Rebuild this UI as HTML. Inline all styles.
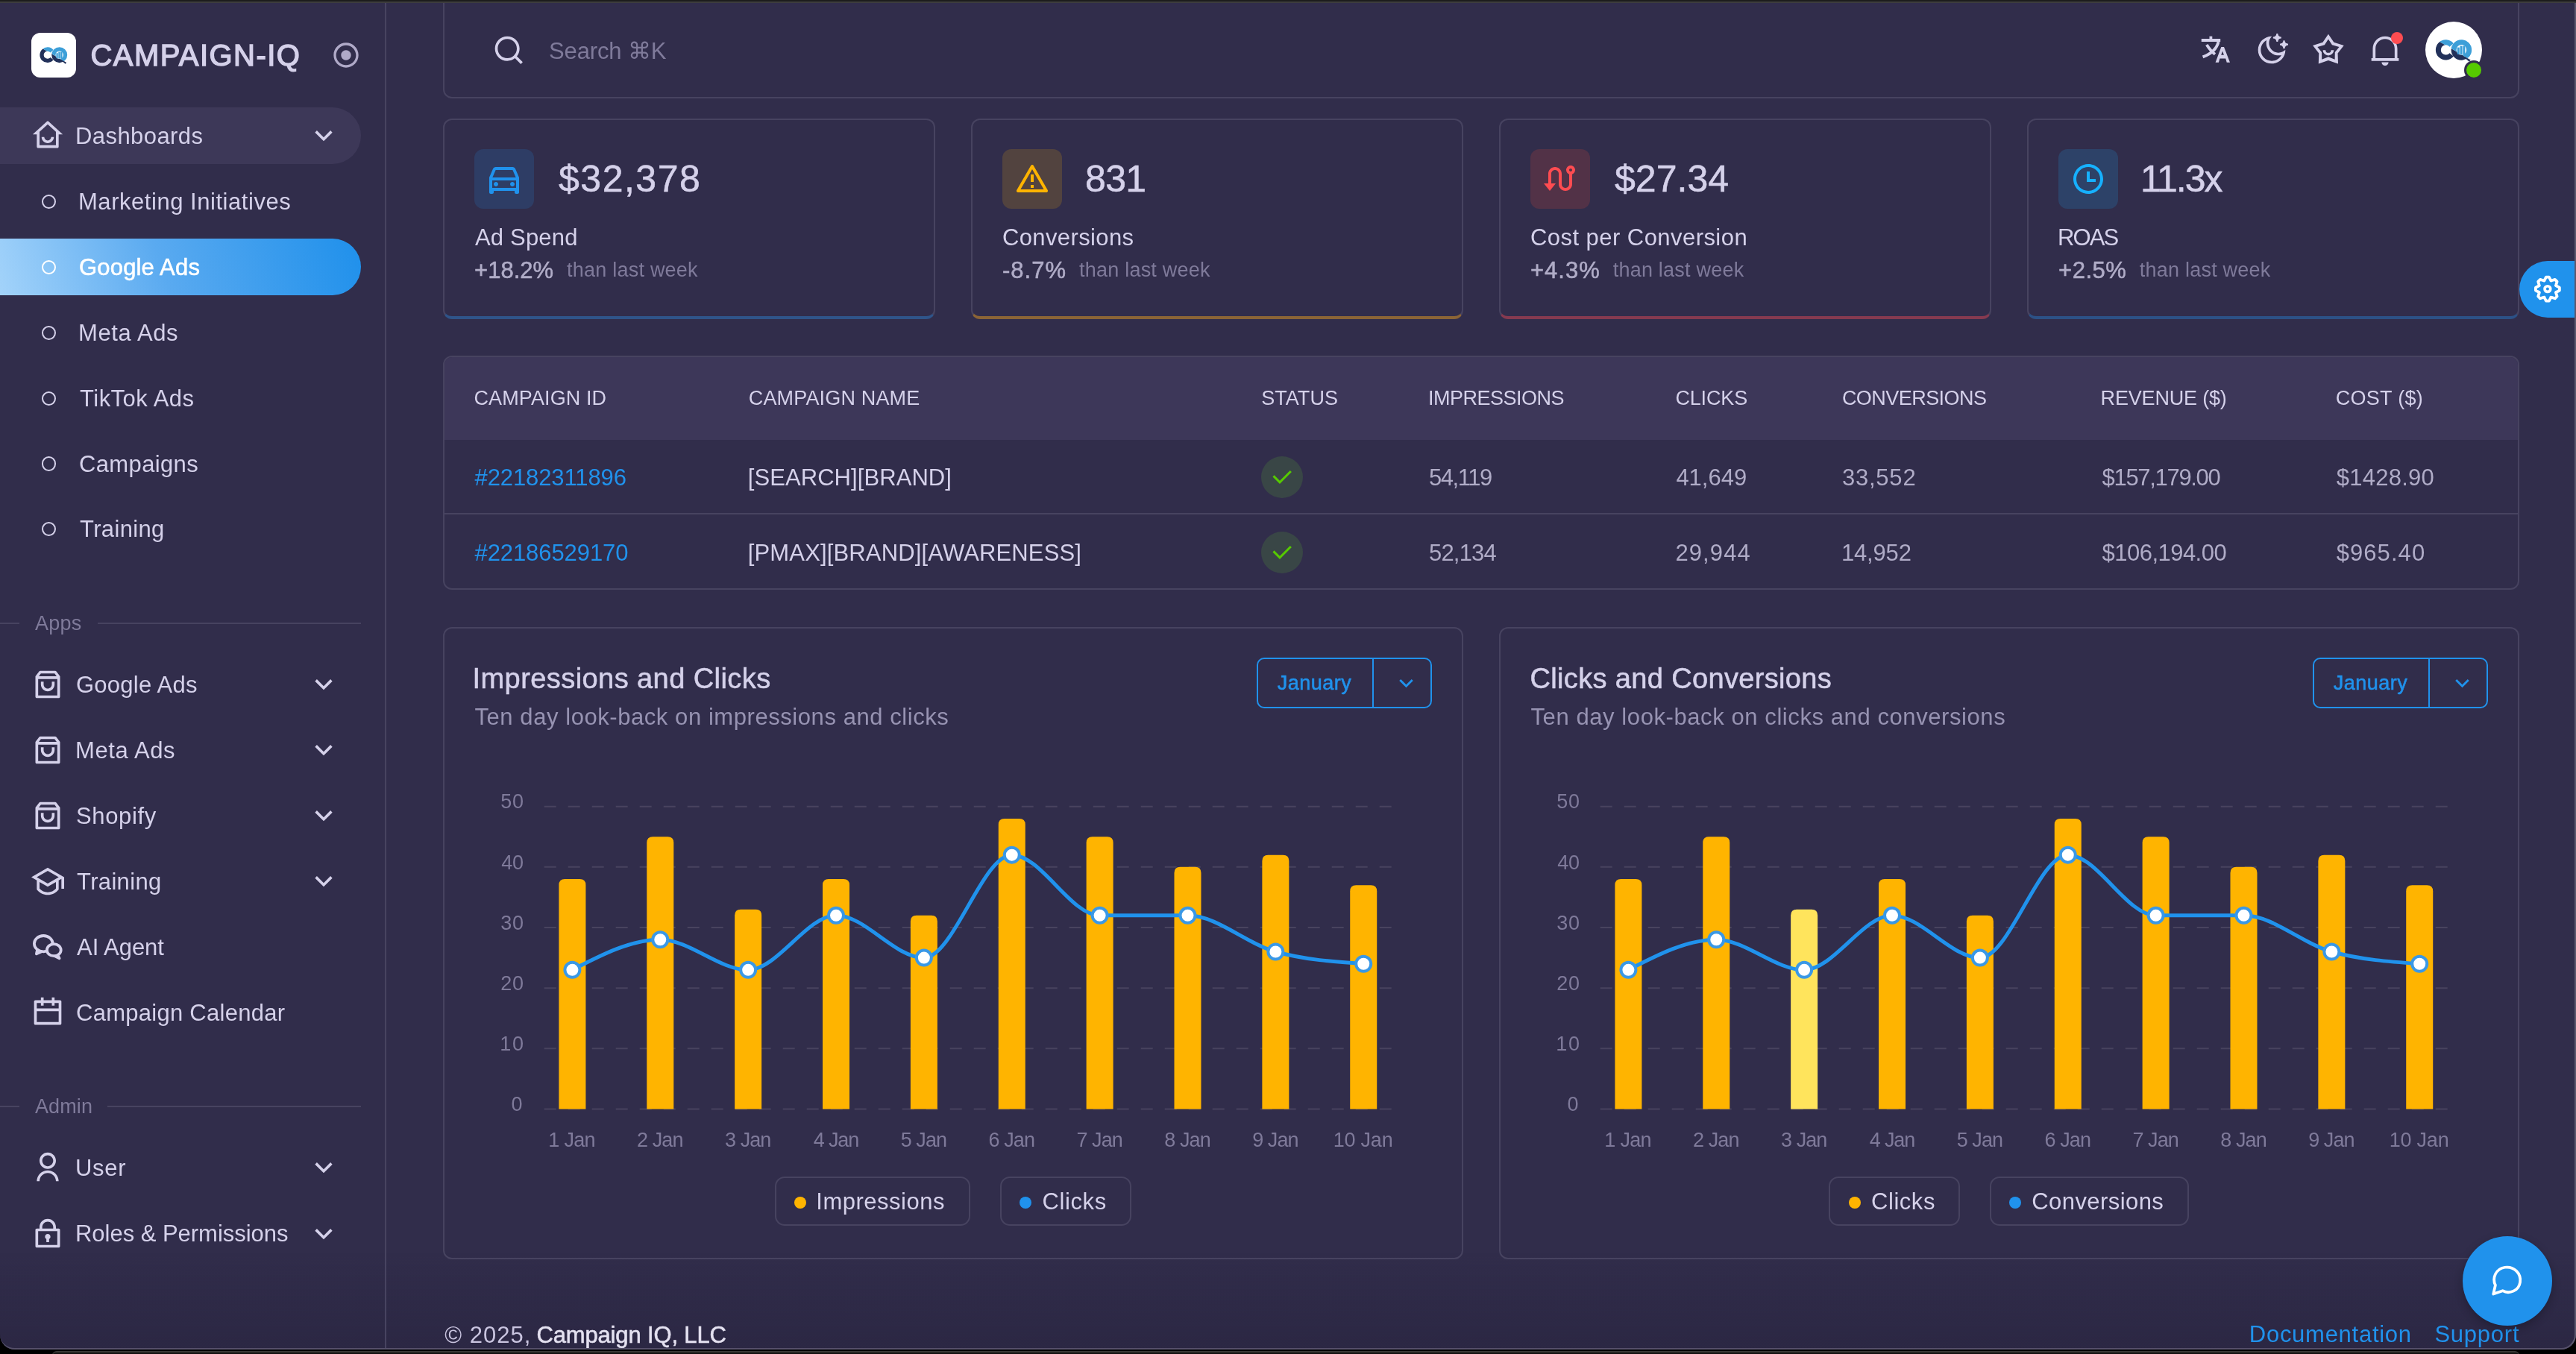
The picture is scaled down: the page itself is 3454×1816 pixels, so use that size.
<!DOCTYPE html><html><head><meta charset="utf-8"><style>
html,body{margin:0;padding:0;width:3454px;height:1816px;overflow:hidden;background:#312d4b}
#w{position:absolute;left:0;top:0;width:3454px;height:1816px;overflow:hidden;font-family:"Liberation Sans",sans-serif;will-change:transform}
.t{position:absolute;white-space:nowrap;line-height:1}
.r{position:absolute}
.ic{position:absolute;overflow:visible}
@media (max-width:2000px){html{zoom:0.5}}
</style></head><body><div id="w">
<div class="r" style="left:0px;top:1680px;width:3454px;height:130px;background:linear-gradient(180deg,rgba(20,15,35,0) 0%,rgba(20,15,35,0.18) 100%)"></div>
<div class="r" style="left:516px;top:4px;width:2px;height:1804px;background:#474360"></div>
<svg class="ic" style="left:42px;top:44px;width:60px;height:60px" viewBox="0 0 60 60">
<defs><clipPath id="up"><polygon points="-5,-5 65,-5 65,50.6 -5,9.3"/></clipPath><clipPath id="dn"><polygon points="-5,65 65,65 65,50.6 -5,9.3"/></clipPath></defs>
<rect width="60" height="60" rx="12" fill="#fff"/><g clip-path="url(#dn)" fill="none" stroke="#22315a" stroke-width="5.3"><path d="M27.6 24.75A7.7 7.7 0 1 0 27.6 34.65"/><circle cx="37.7" cy="29.7" r="7.85"/><path d="M41.5 35.5 L47 40.2" stroke-width="4.2"/></g>
<g clip-path="url(#up)" fill="none" stroke="#3d9fd8" stroke-width="5.3"><path d="M27.6 24.75A7.7 7.7 0 1 0 27.6 34.65"/><circle cx="37.7" cy="29.7" r="7.85"/></g>
<g fill="#3d9fd8"><rect x="33.4" y="27.2" width="2.3" height="7"/><rect x="36.3" y="25.6" width="2.3" height="9"/><rect x="39.2" y="25.6" width="2.3" height="9"/></g></svg>
<div class="t" style="left:121.50px;top:54.34px;font-size:40px;color:#d5d1ea;letter-spacing:1.438px;-webkit-text-stroke:1.4px #d5d1ea;">CAMPAIGN-IQ</div>
<svg class="ic" style="left:444.0px;top:54.0px;width:40px;height:40px" viewBox="0 0 24 24"><path fill="#b0aac8" fill-rule="nonzero" d="M12 22C6.47715 22 2 17.5228 2 12C2 6.47715 6.47715 2 12 2C17.5228 2 22 6.47715 22 12C22 17.5228 17.5228 22 12 22ZM12 20C16.4183 20 20 16.4183 20 12C20 7.58172 16.4183 4 12 4C7.58172 4 4 7.58172 4 12C4 16.4183 7.58172 20 12 20ZM12 16C9.79086 16 8 14.2091 8 12C8 9.79086 9.79086 8 12 8C14.2091 8 16 9.79086 16 12C16 14.2091 14.2091 16 12 16Z"/></svg>
<div class="r" style="left:0px;top:144px;width:484px;height:76px;background:#3d3858;border-radius:0 38px 38px 0"></div>
<svg class="ic" style="left:42.0px;top:159.8px;width:44px;height:44px" viewBox="0 0 24 24"><path fill="#d5d1ea" fill-rule="nonzero" d="M19 21H5C4.44772 21 4 20.5523 4 20V11L1 11L11.3273 1.6115C11.7087 1.26475 12.2913 1.26475 12.6727 1.6115L23 11L20 11V20C20 20.5523 19.5523 21 19 21ZM6 19H18V9.15745L12 3.7029L6 9.15745V19ZM7.5 13H9.5C9.5 14.3807 10.6193 15.5 12 15.5C13.3807 15.5 14.5 14.3807 14.5 13H16.5C16.5 15.4853 14.4853 17.5 12 17.5C9.51472 17.5 7.5 15.4853 7.5 13Z"/></svg>
<div class="t" style="left:101.00px;top:166.56px;font-size:31px;color:#d5d1ea;letter-spacing:0.427px;">Dashboards</div>
<svg class="ic" style="left:411.5px;top:159.8px;width:44px;height:44px" viewBox="0 0 24 24"><path fill="#d5d1ea" fill-rule="nonzero" d="M11.9999 13.1714L16.9497 8.22168L18.3639 9.63589L11.9999 15.9999L5.63599 9.63589L7.0502 8.22168L11.9999 13.1714Z"/></svg>
<div class="r" style="left:56.3px;top:260.8px;width:19.2px;height:19.2px;border:2px solid #d5d1ea;border-radius:50%;box-sizing:border-box"></div>
<div class="t" style="left:105.00px;top:254.96px;font-size:31px;color:#d5d1ea;letter-spacing:0.538px;">Marketing Initiatives</div>
<div class="r" style="left:0px;top:320px;width:484px;height:76px;background:linear-gradient(72deg,#a3d3fa 0%,#5aaaf0 45%,#1f90eb 100%);border-radius:0 38px 38px 0"></div>
<div class="r" style="left:56.3px;top:348.7px;width:19.2px;height:19.2px;border:2px solid #ffffff;border-radius:50%;box-sizing:border-box"></div>
<div class="t" style="left:106.00px;top:342.86px;font-size:31px;color:#ffffff;letter-spacing:0.179px;-webkit-text-stroke:0.55px #ffffff;">Google Ads</div>
<div class="r" style="left:56.3px;top:436.6px;width:19.2px;height:19.2px;border:2px solid #d5d1ea;border-radius:50%;box-sizing:border-box"></div>
<div class="t" style="left:105.00px;top:430.76px;font-size:31px;color:#d5d1ea;letter-spacing:0.622px;">Meta Ads</div>
<div class="r" style="left:56.3px;top:524.5px;width:19.2px;height:19.2px;border:2px solid #d5d1ea;border-radius:50%;box-sizing:border-box"></div>
<div class="t" style="left:107.00px;top:518.66px;font-size:31px;color:#d5d1ea;letter-spacing:0.484px;">TikTok Ads</div>
<div class="r" style="left:56.3px;top:612.4px;width:19.2px;height:19.2px;border:2px solid #d5d1ea;border-radius:50%;box-sizing:border-box"></div>
<div class="t" style="left:106.00px;top:606.56px;font-size:31px;color:#d5d1ea;letter-spacing:0.362px;">Campaigns</div>
<div class="r" style="left:56.3px;top:700.3px;width:19.2px;height:19.2px;border:2px solid #d5d1ea;border-radius:50%;box-sizing:border-box"></div>
<div class="t" style="left:107.00px;top:694.46px;font-size:31px;color:#d5d1ea;letter-spacing:0.356px;">Training</div>
<div class="r" style="left:0px;top:835px;width:26px;height:2px;background:#474360"></div>
<div class="t" style="left:46.90px;top:823.44px;font-size:27px;color:#7f7a9a;letter-spacing:0.253px;">Apps</div>
<div class="r" style="left:130.6px;top:835px;width:353.4px;height:2px;background:#474360"></div>
<svg class="ic" style="left:42.0px;top:896.2px;width:44px;height:44px" viewBox="0 0 24 24"><path fill="#d5d1ea" fill-rule="nonzero" d="M6.50488 2H17.5049C17.8196 2 18.116 2.14819 18.3049 2.4L21.0049 6V21C21.0049 21.5523 20.5572 22 20.0049 22H4.00488C3.4526 22 3.00488 21.5523 3.00488 21V6L5.70488 2.4C5.89374 2.14819 6.19013 2 6.50488 2ZM19.0049 8H5.00488V20H19.0049V8ZM18.5049 6L17.0049 4H7.00488L5.50488 6H18.5049ZM9.00488 10V12C9.00488 13.6569 10.348 15 12.0049 15C13.6617 15 15.0049 13.6569 15.0049 12V10H17.0049V12C17.0049 14.7614 14.7663 17 12.0049 17C9.24346 17 7.00488 14.7614 7.00488 12V10H9.00488Z"/></svg>
<div class="t" style="left:102.00px;top:902.76px;font-size:31px;color:#d5d1ea;letter-spacing:0.245px;">Google Ads</div>
<svg class="ic" style="left:411.5px;top:896.2px;width:44px;height:44px" viewBox="0 0 24 24"><path fill="#d5d1ea" fill-rule="nonzero" d="M11.9999 13.1714L16.9497 8.22168L18.3639 9.63589L11.9999 15.9999L5.63599 9.63589L7.0502 8.22168L11.9999 13.1714Z"/></svg>
<svg class="ic" style="left:42.0px;top:984.2px;width:44px;height:44px" viewBox="0 0 24 24"><path fill="#d5d1ea" fill-rule="nonzero" d="M6.50488 2H17.5049C17.8196 2 18.116 2.14819 18.3049 2.4L21.0049 6V21C21.0049 21.5523 20.5572 22 20.0049 22H4.00488C3.4526 22 3.00488 21.5523 3.00488 21V6L5.70488 2.4C5.89374 2.14819 6.19013 2 6.50488 2ZM19.0049 8H5.00488V20H19.0049V8ZM18.5049 6L17.0049 4H7.00488L5.50488 6H18.5049ZM9.00488 10V12C9.00488 13.6569 10.348 15 12.0049 15C13.6617 15 15.0049 13.6569 15.0049 12V10H17.0049V12C17.0049 14.7614 14.7663 17 12.0049 17C9.24346 17 7.00488 14.7614 7.00488 12V10H9.00488Z"/></svg>
<div class="t" style="left:101.00px;top:990.76px;font-size:31px;color:#d5d1ea;letter-spacing:0.622px;">Meta Ads</div>
<svg class="ic" style="left:411.5px;top:984.2px;width:44px;height:44px" viewBox="0 0 24 24"><path fill="#d5d1ea" fill-rule="nonzero" d="M11.9999 13.1714L16.9497 8.22168L18.3639 9.63589L11.9999 15.9999L5.63599 9.63589L7.0502 8.22168L11.9999 13.1714Z"/></svg>
<svg class="ic" style="left:42.0px;top:1072.2px;width:44px;height:44px" viewBox="0 0 24 24"><path fill="#d5d1ea" fill-rule="nonzero" d="M6.50488 2H17.5049C17.8196 2 18.116 2.14819 18.3049 2.4L21.0049 6V21C21.0049 21.5523 20.5572 22 20.0049 22H4.00488C3.4526 22 3.00488 21.5523 3.00488 21V6L5.70488 2.4C5.89374 2.14819 6.19013 2 6.50488 2ZM19.0049 8H5.00488V20H19.0049V8ZM18.5049 6L17.0049 4H7.00488L5.50488 6H18.5049ZM9.00488 10V12C9.00488 13.6569 10.348 15 12.0049 15C13.6617 15 15.0049 13.6569 15.0049 12V10H17.0049V12C17.0049 14.7614 14.7663 17 12.0049 17C9.24346 17 7.00488 14.7614 7.00488 12V10H9.00488Z"/></svg>
<div class="t" style="left:102.00px;top:1078.76px;font-size:31px;color:#d5d1ea;letter-spacing:0.634px;">Shopify</div>
<svg class="ic" style="left:411.5px;top:1072.2px;width:44px;height:44px" viewBox="0 0 24 24"><path fill="#d5d1ea" fill-rule="nonzero" d="M11.9999 13.1714L16.9497 8.22168L18.3639 9.63589L11.9999 15.9999L5.63599 9.63589L7.0502 8.22168L11.9999 13.1714Z"/></svg>
<svg class="ic" style="left:42.0px;top:1160.2px;width:44px;height:44px" viewBox="0 0 24 24"><path fill="#d5d1ea" fill-rule="nonzero" d="M4 11.3333L0 9L12 2L24 9V17.5H22V10.1667L20 11.3333V18.0113L19.7774 18.2864C17.9457 20.5499 15.1418 22 12 22C8.85817 22 6.05429 20.5499 4.22263 18.2864L4 18.0113V11.3333ZM6 12.5V17.2917C7.46721 18.954 9.61112 20 12 20C14.3889 20 16.5328 18.954 18 17.2917V12.5L12 16L6 12.5ZM3.96927 9L12 13.6846L20.0307 9L12 4.31541L3.96927 9Z"/></svg>
<div class="t" style="left:103.00px;top:1166.76px;font-size:31px;color:#d5d1ea;letter-spacing:0.342px;">Training</div>
<svg class="ic" style="left:411.5px;top:1160.2px;width:44px;height:44px" viewBox="0 0 24 24"><path fill="#d5d1ea" fill-rule="nonzero" d="M11.9999 13.1714L16.9497 8.22168L18.3639 9.63589L11.9999 15.9999L5.63599 9.63589L7.0502 8.22168L11.9999 13.1714Z"/></svg>
<svg class="ic" style="left:42px;top:1248.2px;width:44px;height:44px" viewBox="0 0 44 44"><g stroke="#d5d1ea" stroke-width="3.8" stroke-linejoin="round">
<ellipse cx="16.3" cy="17.65" rx="12.4" ry="10.65" fill="none"/><path d="M8.3 24.6 L6.9 31.4 L13.6 28.3" fill="#d5d1ea"/>
<ellipse cx="30.3" cy="26.2" rx="9.4" ry="8.0" fill="#312d4b"/><path d="M35.2 32.6 L37.6 37.3 L31.6 34.3" fill="#d5d1ea"/></g></svg>
<div class="t" style="left:103.00px;top:1254.76px;font-size:31px;color:#d5d1ea;letter-spacing:-0.043px;">AI Agent</div>
<svg class="ic" style="left:42.0px;top:1336.2px;width:44px;height:44px" viewBox="0 0 24 24"><path fill="#d5d1ea" fill-rule="nonzero" d="M9 1V3H15V1H17V3H21C21.5523 3 22 3.44772 22 4V20C22 20.5523 21.5523 21 21 21H3C2.44772 21 2 20.5523 2 20V4C2 3.44772 2.44772 3 3 3H7V1H9ZM20 11H4V19H20V11ZM7 5H4V9H20V5H17V7H15V5H9V7H7V5Z"/></svg>
<div class="t" style="left:102.00px;top:1342.76px;font-size:31px;color:#d5d1ea;letter-spacing:0.269px;">Campaign Calendar</div>
<div class="r" style="left:0px;top:1483px;width:26px;height:2px;background:#474360"></div>
<div class="t" style="left:46.90px;top:1471.44px;font-size:27px;color:#7f7a9a;letter-spacing:0.146px;">Admin</div>
<div class="r" style="left:144px;top:1483px;width:340px;height:2px;background:#474360"></div>
<svg class="ic" style="left:42.0px;top:1544.4px;width:44px;height:44px" viewBox="0 0 24 24"><path fill="#d5d1ea" fill-rule="nonzero" d="M4 22C4 17.5817 7.58172 14 12 14C16.4183 14 20 17.5817 20 22H18C18 18.6863 15.3137 16 12 16C8.68629 16 6 18.6863 6 22H4ZM12 13C8.685 13 6 10.315 6 7C6 3.685 8.685 1 12 1C15.315 1 18 3.685 18 7C18 10.315 15.315 13 12 13ZM12 11C14.21 11 16 9.21 16 7C16 4.79 14.21 3 12 3C9.79 3 8 4.79 8 7C8 9.21 9.79 11 12 11Z"/></svg>
<div class="t" style="left:101.00px;top:1550.96px;font-size:31px;color:#d5d1ea;letter-spacing:0.691px;">User</div>
<svg class="ic" style="left:411.5px;top:1544.4px;width:44px;height:44px" viewBox="0 0 24 24"><path fill="#d5d1ea" fill-rule="nonzero" d="M11.9999 13.1714L16.9497 8.22168L18.3639 9.63589L11.9999 15.9999L5.63599 9.63589L7.0502 8.22168L11.9999 13.1714Z"/></svg>
<svg class="ic" style="left:42.0px;top:1632.7px;width:44px;height:44px" viewBox="0 0 24 24"><path fill="#d5d1ea" fill-rule="nonzero" d="M6 8V7C6 3.68629 8.68629 1 12 1C15.3137 1 18 3.68629 18 7V8H20C20.5523 8 21 8.44772 21 9V21C21 21.5523 20.5523 22 20 22H4C3.44772 22 3 21.5523 3 21V9C3 8.44772 3.44772 8 4 8H6ZM19 10H5V20H19V10ZM11 15.7324C10.4022 15.3866 10 14.7403 10 14C10 12.8954 10.8954 12 12 12C13.1046 12 14 12.8954 14 14C14 14.7403 13.5978 15.3866 13 15.7324V18H11V15.7324ZM8 8H16V7C16 4.79086 14.2091 3 12 3C9.79086 3 8 4.79086 8 7V8Z"/></svg>
<div class="t" style="left:101.00px;top:1639.26px;font-size:31px;color:#d5d1ea;letter-spacing:-0.027px;">Roles &amp; Permissions</div>
<svg class="ic" style="left:411.5px;top:1632.7px;width:44px;height:44px" viewBox="0 0 24 24"><path fill="#d5d1ea" fill-rule="nonzero" d="M11.9999 13.1714L16.9497 8.22168L18.3639 9.63589L11.9999 15.9999L5.63599 9.63589L7.0502 8.22168L11.9999 13.1714Z"/></svg>
<div class="r" style="left:594px;top:-30px;width:2784px;height:162px;border:2px solid #474360;border-radius:12px;box-sizing:border-box"></div>
<svg class="ic" style="left:659.8px;top:45.2px;width:44px;height:44px" viewBox="0 0 24 24"><path fill="#d5d1ea" fill-rule="nonzero" d="M18.031 16.6168L22.3137 20.8995L20.8995 22.3137L16.6168 18.031C15.0769 19.263 13.124 20 11 20C6.032 20 2 15.968 2 11C2 6.032 6.032 2 11 2C15.968 2 20 6.032 20 11C20 13.124 19.263 15.0769 18.031 16.6168ZM16.0247 15.8748C17.2475 14.6146 18 12.8956 18 11C18 7.1325 14.8675 4 11 4C7.1325 4 4 7.1325 4 11C4 14.8675 7.1325 18 11 18C12.8956 18 14.6146 17.2475 15.8748 16.0247L16.0247 15.8748Z"/></svg>
<div class="t" style="left:736.00px;top:52.56px;font-size:31px;color:#7f7a9a;letter-spacing:-0.129px;">Search ⌘K</div>
<svg class="ic" style="left:2948px;top:44px;width:46px;height:46px" viewBox="0 0 46 46"><g fill="#d5d1ea">
<rect x="3.75" y="8" width="25.45" height="4"/><rect x="14.5" y="4.65" width="3.8" height="3.5"/></g>
<g fill="none" stroke="#d5d1ea" stroke-width="3.9"><path d="M26.6 12 C24.5 20.5 17.5 28 5.6 32.4"/><path d="M10.8 16 C14 21 17.5 25.5 22 28.8"/></g>
<path fill="#d5d1ea" fill-rule="evenodd" d="M22.6 39.7 L30.3 19 H34 L42 39.7 H37.7 L36.2 34.4 H28.4 L26.9 39.7 Z M30.2 29.8 H33.9 L32 24.6 Z"/></svg>
<svg class="ic" style="left:3024.2px;top:44.7px;width:44px;height:44px" viewBox="0 0 24 24"><path fill="#d5d1ea" fill-rule="nonzero" d="M10 7C10 10.866 13.134 14 17 14C18.9584 14 20.729 13.1957 21.9995 11.8995C22 11.933 22 11.9665 22 12C22 17.5228 17.5228 22 12 22C6.47715 22 2 17.5228 2 12C2 6.47715 6.47715 2 12 2C12.0335 2 12.067 2 12.1005 2.00049C10.8043 3.27098 10 5.04157 10 7ZM4 12C4 16.4183 7.58172 20 12 20C15.0583 20 17.7158 18.2839 19.062 15.7621C18.3945 15.9187 17.7035 16 17 16C12.0294 16 8 11.9706 8 7C8 6.29648 8.08133 5.60547 8.2379 4.938C5.71611 6.28423 4 8.9417 4 12ZM18.1641 2.29261L19 2.5V3.5L18.1641 3.70739C17.4463 3.88549 16.8855 4.44628 16.7074 5.16405L16.5 6H15.5L15.2926 5.16405C15.1145 4.44628 14.5537 3.88549 13.8359 3.70739L13 3.5V2.5L13.8359 2.29261C14.5537 2.11451 15.1145 1.55372 15.2926 0.835948L15.5 0H16.5L16.7074 0.835948C16.8855 1.55372 17.4463 2.11451 18.1641 2.29261ZM23.1641 7.29261L24 7.5V8.5L23.1641 8.70739C22.4463 8.88549 21.8855 9.44628 21.7074 10.1641L21.5 11H20.5L20.2926 10.1641C20.1145 9.44628 19.5537 8.88549 18.8359 8.70739L18 8.5V7.5L18.8359 7.29261C19.5537 7.11451 20.1145 6.55372 20.2926 5.83595L20.5 5H21.5L21.7074 5.83595C21.8855 6.55372 22.4463 7.11451 23.1641 7.29261Z"/></svg>
<svg class="ic" style="left:3100.2px;top:45.3px;width:44px;height:44px" viewBox="0 0 24 24"><path fill="#d5d1ea" fill-rule="evenodd" d="M11.95 0.42L16 6.45L23.3 8.78L18.85 14.5L19.1 22.1L11.95 19.6L4.8 22.1L5.05 14.5L0.6 8.78L7.9 6.45Z M11.95 4.04L9.2 8.3L4 9.8L7.1 13.7L7.2 18.9L11.95 17.1L16.7 18.9L16.8 13.7L19.9 9.8L14.7 8.3Z M7.95 12.1H9.95A2 2 0 0 0 13.95 12.1H15.95A4 4 0 0 1 7.95 12.1Z"/></svg>
<svg class="ic" style="left:3176.2px;top:45.099999999999994px;width:44px;height:44px" viewBox="0 0 24 24"><path fill="#d5d1ea" fill-rule="nonzero" d="M22 20H2V18H3V11.0314C3 6.04348 7.02944 2 12 2C16.9706 2 21 6.04348 21 11.0314V18H22V20ZM5 18H19V11.0314C19 7.14806 15.866 4 12 4C8.13401 4 5 7.14806 5 11.0314V18ZM9.5 21H14.5C14.5 22.3807 13.3807 23.5 12 23.5C10.6193 23.5 9.5 22.3807 9.5 21Z"/></svg>
<div class="r" style="left:3205.8px;top:42.8px;width:16.3px;height:16.3px;background:#ff4c51;border-radius:50%"></div>
<div class="r" style="left:3251.7px;top:29px;width:76px;height:76px;border-radius:50%;background:#fff"></div>
<svg class="ic" style="left:3251px;top:28.1px;width:78.6px;height:78.6px" viewBox="0 0 60 60"><g clip-path="url(#dn)" fill="none" stroke="#22315a" stroke-width="5.3"><path d="M27.6 24.75A7.7 7.7 0 1 0 27.6 34.65"/><circle cx="37.7" cy="29.7" r="7.85"/><path d="M41.5 35.5 L47 40.2" stroke-width="4.2"/></g>
<g clip-path="url(#up)" fill="none" stroke="#3d9fd8" stroke-width="5.3"><path d="M27.6 24.75A7.7 7.7 0 1 0 27.6 34.65"/><circle cx="37.7" cy="29.7" r="7.85"/></g>
<g fill="#3d9fd8"><rect x="33.4" y="27.2" width="2.3" height="7"/><rect x="36.3" y="25.6" width="2.3" height="9"/><rect x="39.2" y="25.6" width="2.3" height="9"/></g></svg>
<div class="r" style="left:3303.5px;top:81px;width:26.4px;height:26.4px;background:#56ca00;border:3.5px solid #312d4b;border-radius:50%;box-sizing:border-box"></div>
<div class="r" style="left:594px;top:159px;width:660px;height:269px;border:2px solid #474360;border-bottom:4px solid #2f5489;border-radius:12px;box-sizing:border-box"></div>
<div class="r" style="left:636px;top:200px;width:80px;height:80px;background:#2e3d65;border-radius:12px"></div>
<svg class="ic" style="left:652.0px;top:216.0px;width:48px;height:48px" viewBox="0 0 24 24"><path fill="#2092ec" fill-rule="nonzero" d="M19 20H5V21C5 21.5523 4.55228 22 4 22H3C2.44772 22 2 21.5523 2 21V11L4.4805 5.21216C4.79566 4.47679 5.51874 4 6.31879 4H17.6812C18.4813 4 19.2043 4.47679 19.5195 5.21216L22 11V21C22 21.5523 21.5523 22 21 22H20C19.4477 22 19 21.5523 19 21V20ZM20 13H4V18H20V13ZM4.17594 11H19.8241L17.6812 6H6.31879L4.17594 11ZM6.5 17C5.67157 17 5 16.3284 5 15.5C5 14.6716 5.67157 14 6.5 14C7.32843 14 8 14.6716 8 15.5C8 16.3284 7.32843 17 6.5 17ZM17.5 17C16.6716 17 16 16.3284 16 15.5C16 14.6716 16.6716 14 17.5 14C18.3284 14 19 14.6716 19 15.5C19 16.3284 18.3284 17 17.5 17Z"/></svg>
<div class="t" style="left:749.00px;top:215.18px;font-size:50px;color:#d5d1ea;letter-spacing:1.512px;-webkit-text-stroke:0.55px #d5d1ea;">$32,378</div>
<div class="t" style="left:637.00px;top:302.76px;font-size:31px;color:#d5d1ea;letter-spacing:0.182px;">Ad Spend</div>
<div class="t" style="left:636.00px;top:346.56px;font-size:31px;color:#b0acc7;letter-spacing:0.032px;-webkit-text-stroke:0.55px #b0acc7;">+18.2%</div>
<div class="t" style="left:760.10px;top:349.14px;font-size:27px;color:#7f7a9a;letter-spacing:0.223px;">than last week</div>
<div class="r" style="left:1302px;top:159px;width:660px;height:269px;border:2px solid #474360;border-bottom:4px solid #8b6436;border-radius:12px;box-sizing:border-box"></div>
<div class="r" style="left:1344px;top:200px;width:80px;height:80px;background:#52433f;border-radius:12px"></div>
<svg class="ic" style="left:1360.0px;top:216.0px;width:48px;height:48px" viewBox="0 0 24 24"><path fill="#ffb400" fill-rule="nonzero" d="M12.8659 3.00017L22.3922 19.5002C22.6684 19.9785 22.5045 20.5901 22.0262 20.8662C21.8742 20.954 21.7017 21.0002 21.5262 21.0002H2.47363C1.92135 21.0002 1.47363 20.5525 1.47363 20.0002C1.47363 19.8246 1.51984 19.6522 1.60761 19.5002L11.1339 3.00017C11.41 2.52187 12.0216 2.358 12.4999 2.63414C12.6519 2.72191 12.7782 2.84815 12.8659 3.00017ZM4.20568 19.0002H19.7941L11.9999 5.50017L4.20568 19.0002ZM10.9999 16.0002H12.9999V18.0002H10.9999V16.0002ZM10.9999 9.00017H12.9999V14.0002H10.9999V9.00017Z"/></svg>
<div class="t" style="left:1455.00px;top:215.18px;font-size:50px;color:#d5d1ea;letter-spacing:-0.658px;-webkit-text-stroke:0.55px #d5d1ea;">831</div>
<div class="t" style="left:1344.00px;top:302.76px;font-size:31px;color:#d5d1ea;letter-spacing:0.370px;">Conversions</div>
<div class="t" style="left:1344.00px;top:346.56px;font-size:31px;color:#b0acc7;letter-spacing:1.021px;-webkit-text-stroke:0.55px #b0acc7;">-8.7%</div>
<div class="t" style="left:1447.00px;top:349.14px;font-size:27px;color:#7f7a9a;letter-spacing:0.223px;">than last week</div>
<div class="r" style="left:2010px;top:159px;width:660px;height:269px;border:2px solid #474360;border-bottom:4px solid #863a50;border-radius:12px;box-sizing:border-box"></div>
<div class="r" style="left:2052px;top:200px;width:80px;height:80px;background:#523247;border-radius:12px"></div>
<svg class="ic" style="left:2068.0px;top:216.0px;width:48px;height:48px" viewBox="0 0 24 24"><path fill="#ff4c51" fill-rule="nonzero" d="M4 15V8.5C4 6.01472 6.01472 4 8.5 4C10.9853 4 13 6.01472 13 8.5V15.5C13 16.8807 14.1193 18 15.5 18C16.8807 18 18 16.8807 18 15.5V8.82929C16.8348 8.41746 16 7.30622 16 6C16 4.34315 17.3431 3 19 3C20.6569 3 22 4.34315 22 6C22 7.30622 21.1652 8.41746 20 8.82929V15.5C20 17.9853 17.9853 20 15.5 20C13.0147 20 11 17.9853 11 15.5V8.5C11 7.11929 9.88071 6 8.5 6C7.11929 6 6 7.11929 6 8.5V15H9L5 20L1 15H4ZM19 7C19.5523 7 20 6.55228 20 6C20 5.44772 19.5523 5 19 5C18.4477 5 18 5.44772 18 6C18 6.55228 18.4477 7 19 7Z"/></svg>
<div class="t" style="left:2165.00px;top:215.18px;font-size:50px;color:#d5d1ea;letter-spacing:0.016px;-webkit-text-stroke:0.55px #d5d1ea;">$27.34</div>
<div class="t" style="left:2052.00px;top:302.76px;font-size:31px;color:#d5d1ea;letter-spacing:0.448px;">Cost per Conversion</div>
<div class="t" style="left:2052.00px;top:346.56px;font-size:31px;color:#b0acc7;letter-spacing:1.001px;-webkit-text-stroke:0.55px #b0acc7;">+4.3%</div>
<div class="t" style="left:2162.70px;top:349.14px;font-size:27px;color:#7f7a9a;letter-spacing:0.223px;">than last week</div>
<div class="r" style="left:2718px;top:159px;width:660px;height:269px;border:2px solid #474360;border-bottom:4px solid #2c5186;border-radius:12px;box-sizing:border-box"></div>
<div class="r" style="left:2760px;top:200px;width:80px;height:80px;background:#2d4268;border-radius:12px"></div>
<svg class="ic" style="left:2776.0px;top:216.0px;width:48px;height:48px" viewBox="0 0 24 24"><path fill="#16b1ff" fill-rule="nonzero" d="M12 22C6.47715 22 2 17.5228 2 12C2 6.47715 6.47715 2 12 2C17.5228 2 22 6.47715 22 12C22 17.5228 17.5228 22 12 22ZM12 20C16.4183 20 20 16.4183 20 12C20 7.58172 16.4183 4 12 4C7.58172 4 4 7.58172 4 12C4 16.4183 7.58172 20 12 20ZM13 12H17V14H11V7H13V12Z"/></svg>
<div class="t" style="left:2870.00px;top:215.18px;font-size:50px;color:#d5d1ea;letter-spacing:-2.026px;-webkit-text-stroke:0.55px #d5d1ea;">11.3x</div>
<div class="t" style="left:2759.00px;top:302.76px;font-size:31px;color:#d5d1ea;letter-spacing:-1.892px;">ROAS</div>
<div class="t" style="left:2760.00px;top:346.56px;font-size:31px;color:#b0acc7;letter-spacing:0.526px;-webkit-text-stroke:0.55px #b0acc7;">+2.5%</div>
<div class="t" style="left:2868.80px;top:349.14px;font-size:27px;color:#7f7a9a;letter-spacing:0.223px;">than last week</div>
<div class="r" style="left:594px;top:476.5px;width:2784px;height:314px;border:2px solid #474360;border-radius:12px;box-sizing:border-box"></div>
<div class="r" style="left:596px;top:478.5px;width:2780px;height:111px;background:#3d3759;border-radius:10px 10px 0 0"></div>
<div class="r" style="left:596px;top:688px;width:2780px;height:2px;background:#474360"></div>
<div class="t" style="left:635.50px;top:521.14px;font-size:27px;color:#d5d1ea;letter-spacing:0.108px;">CAMPAIGN ID</div>
<div class="t" style="left:1003.80px;top:521.14px;font-size:27px;color:#d5d1ea;letter-spacing:0.157px;">CAMPAIGN NAME</div>
<div class="t" style="left:1691.20px;top:521.14px;font-size:27px;color:#d5d1ea;letter-spacing:0.061px;">STATUS</div>
<div class="t" style="left:1915.00px;top:521.14px;font-size:27px;color:#d5d1ea;letter-spacing:-0.503px;">IMPRESSIONS</div>
<div class="t" style="left:2246.40px;top:521.14px;font-size:27px;color:#d5d1ea;letter-spacing:-0.145px;">CLICKS</div>
<div class="t" style="left:2469.90px;top:521.14px;font-size:27px;color:#d5d1ea;letter-spacing:-0.542px;">CONVERSIONS</div>
<div class="t" style="left:2816.60px;top:521.14px;font-size:27px;color:#d5d1ea;letter-spacing:-0.184px;">REVENUE ($)</div>
<div class="t" style="left:3131.70px;top:521.14px;font-size:27px;color:#d5d1ea;letter-spacing:0.299px;">COST ($)</div>
<div class="t" style="left:636.50px;top:625.06px;font-size:31px;color:#2092ec;letter-spacing:-0.104px;">#22182311896</div>
<div class="t" style="left:1002.80px;top:625.06px;font-size:31px;color:#d5d1ea;letter-spacing:0.068px;">[SEARCH][BRAND]</div>
<div class="r" style="left:1690.7px;top:611.6px;width:56px;height:56px;background:#394646;border-radius:50%"></div>
<svg class="ic" style="left:1700.7px;top:621.6px;width:36px;height:36px" viewBox="0 0 24 24"><path fill="#56ca00" fill-rule="nonzero" d="M9.9997 15.1709L19.1921 5.97852L20.6063 7.39273L9.9997 17.9993L3.63574 11.6354L5.04996 10.2212L9.9997 15.1709Z"/></svg>
<div class="t" style="left:1916.00px;top:625.06px;font-size:31px;color:#b0acc7;letter-spacing:-1.455px;">54,119</div>
<div class="t" style="left:2247.40px;top:625.06px;font-size:31px;color:#b0acc7;letter-spacing:-0.015px;">41,649</div>
<div class="t" style="left:2469.90px;top:625.06px;font-size:31px;color:#b0acc7;letter-spacing:0.785px;">33,552</div>
<div class="t" style="left:2818.60px;top:625.06px;font-size:31px;color:#b0acc7;letter-spacing:-1.325px;">$157,179.00</div>
<div class="t" style="left:3132.70px;top:625.06px;font-size:31px;color:#b0acc7;letter-spacing:0.249px;">$1428.90</div>
<div class="t" style="left:636.50px;top:726.06px;font-size:31px;color:#2092ec;letter-spacing:-0.086px;">#22186529170</div>
<div class="t" style="left:1002.80px;top:726.06px;font-size:31px;color:#d5d1ea;letter-spacing:0.142px;">[PMAX][BRAND][AWARENESS]</div>
<div class="r" style="left:1690.7px;top:712.6px;width:56px;height:56px;background:#394646;border-radius:50%"></div>
<svg class="ic" style="left:1700.7px;top:722.6px;width:36px;height:36px" viewBox="0 0 24 24"><path fill="#56ca00" fill-rule="nonzero" d="M9.9997 15.1709L19.1921 5.97852L20.6063 7.39273L9.9997 17.9993L3.63574 11.6354L5.04996 10.2212L9.9997 15.1709Z"/></svg>
<div class="t" style="left:1916.00px;top:726.06px;font-size:31px;color:#b0acc7;letter-spacing:-0.815px;">52,134</div>
<div class="t" style="left:2246.40px;top:726.06px;font-size:31px;color:#b0acc7;letter-spacing:1.105px;">29,944</div>
<div class="t" style="left:2468.90px;top:726.06px;font-size:31px;color:#b0acc7;letter-spacing:-0.155px;">14,952</div>
<div class="t" style="left:2818.60px;top:726.06px;font-size:31px;color:#b0acc7;letter-spacing:-0.535px;">$106,194.00</div>
<div class="t" style="left:3132.70px;top:726.06px;font-size:31px;color:#b0acc7;letter-spacing:1.064px;">$965.40</div>
<div class="r" style="left:594px;top:840.7px;width:1368px;height:848.5px;border:2px solid #474360;border-radius:12px;box-sizing:border-box"></div>
<div class="t" style="left:633.50px;top:891.13px;font-size:38px;color:#d5d1ea;letter-spacing:0.429px;-webkit-text-stroke:0.55px #d5d1ea;">Impressions and Clicks</div>
<div class="t" style="left:636.50px;top:945.76px;font-size:31px;color:#9793b2;letter-spacing:0.563px;">Ten day look-back on impressions and clicks</div>
<div class="r" style="left:1685px;top:882px;width:235px;height:67.5px;border:2px solid #2092ec;border-radius:10px;box-sizing:border-box"></div>
<div class="r" style="left:1840px;top:882px;width:2px;height:67.5px;background:#2092ec"></div>
<div class="t" style="left:1712.80px;top:902.94px;font-size:27px;color:#2092ec;letter-spacing:0.474px;-webkit-text-stroke:0.55px #2092ec;">January</div>
<svg class="ic" style="left:1868.2px;top:899.0px;width:35px;height:35px" viewBox="0 0 24 24"><path fill="#2092ec" fill-rule="nonzero" d="M11.9999 13.1714L16.9497 8.22168L18.3639 9.63589L11.9999 15.9999L5.63599 9.63589L7.0502 8.22168L11.9999 13.1714Z"/></svg>
<svg class="ic" style="left:594px;top:1040px;width:1368px;height:460px" viewBox="594 1040 1368 460"><line x1="729.7" y1="1487.50" x2="1866" y2="1487.50" stroke="#48435f" stroke-width="2" stroke-dasharray="16 16"/><line x1="729.7" y1="1406.34" x2="1866" y2="1406.34" stroke="#48435f" stroke-width="2" stroke-dasharray="16 16"/><line x1="729.7" y1="1325.18" x2="1866" y2="1325.18" stroke="#48435f" stroke-width="2" stroke-dasharray="16 16"/><line x1="729.7" y1="1244.02" x2="1866" y2="1244.02" stroke="#48435f" stroke-width="2" stroke-dasharray="16 16"/><line x1="729.7" y1="1162.86" x2="1866" y2="1162.86" stroke="#48435f" stroke-width="2" stroke-dasharray="16 16"/><line x1="729.7" y1="1081.70" x2="1866" y2="1081.70" stroke="#48435f" stroke-width="2" stroke-dasharray="16 16"/><path fill="#ffb400" d="M749.40 1487.5V1187.09Q749.40 1179.09 757.40 1179.09H777.40Q785.40 1179.09 785.40 1187.09V1487.5Z"/><path fill="#ffb400" d="M867.27 1487.5V1130.28Q867.27 1122.28 875.27 1122.28H895.27Q903.27 1122.28 903.27 1130.28V1487.5Z"/><path fill="#ffb400" d="M985.14 1487.5V1227.67Q985.14 1219.67 993.14 1219.67H1013.14Q1021.14 1219.67 1021.14 1227.67V1487.5Z"/><path fill="#ffb400" d="M1103.01 1487.5V1187.09Q1103.01 1179.09 1111.01 1179.09H1131.01Q1139.01 1179.09 1139.01 1187.09V1487.5Z"/><path fill="#ffb400" d="M1220.88 1487.5V1235.79Q1220.88 1227.79 1228.88 1227.79H1248.88Q1256.88 1227.79 1256.88 1235.79V1487.5Z"/><path fill="#ffb400" d="M1338.75 1487.5V1105.93Q1338.75 1097.93 1346.75 1097.93H1366.75Q1374.75 1097.93 1374.75 1105.93V1487.5Z"/><path fill="#ffb400" d="M1456.62 1487.5V1130.28Q1456.62 1122.28 1464.62 1122.28H1484.62Q1492.62 1122.28 1492.62 1130.28V1487.5Z"/><path fill="#ffb400" d="M1574.49 1487.5V1170.86Q1574.49 1162.86 1582.49 1162.86H1602.49Q1610.49 1162.86 1610.49 1170.86V1487.5Z"/><path fill="#ffb400" d="M1692.36 1487.5V1154.63Q1692.36 1146.63 1700.36 1146.63H1720.36Q1728.36 1146.63 1728.36 1154.63V1487.5Z"/><path fill="#ffb400" d="M1810.23 1487.5V1195.21Q1810.23 1187.21 1818.23 1187.21H1838.23Q1846.23 1187.21 1846.23 1195.21V1487.5Z"/><path d="M767.40 1300.83C806.69 1280.54 845.98 1260.25 885.27 1260.25C924.56 1260.25 963.85 1300.83 1003.14 1300.83C1042.43 1300.83 1081.72 1227.79 1121.01 1227.79C1160.30 1227.79 1199.59 1284.60 1238.88 1284.60C1278.17 1284.60 1317.46 1146.63 1356.75 1146.63C1396.04 1146.63 1435.33 1227.79 1474.62 1227.79C1513.91 1227.79 1553.20 1227.79 1592.49 1227.79C1631.78 1227.79 1671.07 1265.66 1710.36 1276.48C1749.65 1287.31 1788.94 1290.01 1828.23 1292.72" fill="none" stroke="#2092ec" stroke-width="5"/><circle cx="767.40" cy="1300.83" r="10" fill="#fff" stroke="#3a98e6" stroke-width="4"/><circle cx="885.27" cy="1260.25" r="10" fill="#fff" stroke="#3a98e6" stroke-width="4"/><circle cx="1003.14" cy="1300.83" r="10" fill="#fff" stroke="#3a98e6" stroke-width="4"/><circle cx="1121.01" cy="1227.79" r="10" fill="#fff" stroke="#3a98e6" stroke-width="4"/><circle cx="1238.88" cy="1284.60" r="10" fill="#fff" stroke="#3a98e6" stroke-width="4"/><circle cx="1356.75" cy="1146.63" r="10" fill="#fff" stroke="#3a98e6" stroke-width="4"/><circle cx="1474.62" cy="1227.79" r="10" fill="#fff" stroke="#3a98e6" stroke-width="4"/><circle cx="1592.49" cy="1227.79" r="10" fill="#fff" stroke="#3a98e6" stroke-width="4"/><circle cx="1710.36" cy="1276.48" r="10" fill="#fff" stroke="#3a98e6" stroke-width="4"/><circle cx="1828.23" cy="1292.72" r="10" fill="#fff" stroke="#3a98e6" stroke-width="4"/></svg>
<div class="t" style="left:685.50px;top:1468.14px;font-size:27px;color:#7f7a9a;">0</div>
<div class="t" style="left:670.30px;top:1386.98px;font-size:27px;color:#7f7a9a;letter-spacing:1.684px;">10</div>
<div class="t" style="left:671.30px;top:1305.82px;font-size:27px;color:#7f7a9a;letter-spacing:0.684px;">20</div>
<div class="t" style="left:671.30px;top:1224.66px;font-size:27px;color:#7f7a9a;letter-spacing:0.684px;">30</div>
<div class="t" style="left:672.30px;top:1143.50px;font-size:27px;color:#7f7a9a;letter-spacing:-0.316px;">40</div>
<div class="t" style="left:671.30px;top:1062.34px;font-size:27px;color:#7f7a9a;letter-spacing:0.684px;">50</div>
<div class="t" style="left:735.20px;top:1515.64px;font-size:27px;color:#7f7a9a;letter-spacing:-0.658px;">1 Jan</div>
<div class="t" style="left:854.07px;top:1515.64px;font-size:27px;color:#7f7a9a;letter-spacing:-0.908px;">2 Jan</div>
<div class="t" style="left:971.94px;top:1515.64px;font-size:27px;color:#7f7a9a;letter-spacing:-0.908px;">3 Jan</div>
<div class="t" style="left:1090.81px;top:1515.64px;font-size:27px;color:#7f7a9a;letter-spacing:-1.158px;">4 Jan</div>
<div class="t" style="left:1207.68px;top:1515.64px;font-size:27px;color:#7f7a9a;letter-spacing:-0.908px;">5 Jan</div>
<div class="t" style="left:1325.55px;top:1515.64px;font-size:27px;color:#7f7a9a;letter-spacing:-0.908px;">6 Jan</div>
<div class="t" style="left:1443.42px;top:1515.64px;font-size:27px;color:#7f7a9a;letter-spacing:-0.908px;">7 Jan</div>
<div class="t" style="left:1561.29px;top:1515.64px;font-size:27px;color:#7f7a9a;letter-spacing:-0.908px;">8 Jan</div>
<div class="t" style="left:1679.16px;top:1515.64px;font-size:27px;color:#7f7a9a;letter-spacing:-0.908px;">9 Jan</div>
<div class="t" style="left:1787.83px;top:1515.64px;font-size:27px;color:#7f7a9a;letter-spacing:-0.250px;">10 Jan</div>
<div class="r" style="left:1038.5px;top:1578.2px;width:262.90000000000003px;height:65.6px;border:2px solid #474360;border-radius:13px;box-sizing:border-box"></div>
<div class="r" style="left:1064.8px;top:1604.6px;width:16px;height:16px;background:#ffb400;border-radius:50%"></div>
<div class="t" style="left:1094.30px;top:1596.06px;font-size:31px;color:#d5d1ea;letter-spacing:0.499px;">Impressions</div>
<div class="r" style="left:1340.7px;top:1578.2px;width:176.5px;height:65.6px;border:2px solid #474360;border-radius:13px;box-sizing:border-box"></div>
<div class="r" style="left:1367px;top:1604.6px;width:16px;height:16px;background:#2092ec;border-radius:50%"></div>
<div class="t" style="left:1397.50px;top:1596.06px;font-size:31px;color:#d5d1ea;letter-spacing:0.608px;">Clicks</div>
<div class="r" style="left:2010px;top:840.7px;width:1368px;height:848.5px;border:2px solid #474360;border-radius:12px;box-sizing:border-box"></div>
<div class="t" style="left:2051.50px;top:891.13px;font-size:38px;color:#d5d1ea;letter-spacing:0.345px;-webkit-text-stroke:0.55px #d5d1ea;">Clicks and Conversions</div>
<div class="t" style="left:2052.50px;top:945.76px;font-size:31px;color:#9793b2;letter-spacing:0.583px;">Ten day look-back on clicks and conversions</div>
<div class="r" style="left:3101px;top:882px;width:235px;height:67.5px;border:2px solid #2092ec;border-radius:10px;box-sizing:border-box"></div>
<div class="r" style="left:3256px;top:882px;width:2px;height:67.5px;background:#2092ec"></div>
<div class="t" style="left:3128.80px;top:902.94px;font-size:27px;color:#2092ec;letter-spacing:0.474px;-webkit-text-stroke:0.55px #2092ec;">January</div>
<svg class="ic" style="left:3284.2px;top:899.0px;width:35px;height:35px" viewBox="0 0 24 24"><path fill="#2092ec" fill-rule="nonzero" d="M11.9999 13.1714L16.9497 8.22168L18.3639 9.63589L11.9999 15.9999L5.63599 9.63589L7.0502 8.22168L11.9999 13.1714Z"/></svg>
<svg class="ic" style="left:2010px;top:1040px;width:1368px;height:460px" viewBox="2010 1040 1368 460"><line x1="2145.7" y1="1487.50" x2="3282" y2="1487.50" stroke="#48435f" stroke-width="2" stroke-dasharray="16 16"/><line x1="2145.7" y1="1406.34" x2="3282" y2="1406.34" stroke="#48435f" stroke-width="2" stroke-dasharray="16 16"/><line x1="2145.7" y1="1325.18" x2="3282" y2="1325.18" stroke="#48435f" stroke-width="2" stroke-dasharray="16 16"/><line x1="2145.7" y1="1244.02" x2="3282" y2="1244.02" stroke="#48435f" stroke-width="2" stroke-dasharray="16 16"/><line x1="2145.7" y1="1162.86" x2="3282" y2="1162.86" stroke="#48435f" stroke-width="2" stroke-dasharray="16 16"/><line x1="2145.7" y1="1081.70" x2="3282" y2="1081.70" stroke="#48435f" stroke-width="2" stroke-dasharray="16 16"/><path fill="#ffb400" d="M2165.40 1487.5V1187.09Q2165.40 1179.09 2173.40 1179.09H2193.40Q2201.40 1179.09 2201.40 1187.09V1487.5Z"/><path fill="#ffb400" d="M2283.27 1487.5V1130.28Q2283.27 1122.28 2291.27 1122.28H2311.27Q2319.27 1122.28 2319.27 1130.28V1487.5Z"/><path fill="#ffe45c" d="M2401.14 1487.5V1227.67Q2401.14 1219.67 2409.14 1219.67H2429.14Q2437.14 1219.67 2437.14 1227.67V1487.5Z"/><path fill="#ffb400" d="M2519.01 1487.5V1187.09Q2519.01 1179.09 2527.01 1179.09H2547.01Q2555.01 1179.09 2555.01 1187.09V1487.5Z"/><path fill="#ffb400" d="M2636.88 1487.5V1235.79Q2636.88 1227.79 2644.88 1227.79H2664.88Q2672.88 1227.79 2672.88 1235.79V1487.5Z"/><path fill="#ffb400" d="M2754.75 1487.5V1105.93Q2754.75 1097.93 2762.75 1097.93H2782.75Q2790.75 1097.93 2790.75 1105.93V1487.5Z"/><path fill="#ffb400" d="M2872.62 1487.5V1130.28Q2872.62 1122.28 2880.62 1122.28H2900.62Q2908.62 1122.28 2908.62 1130.28V1487.5Z"/><path fill="#ffb400" d="M2990.49 1487.5V1170.86Q2990.49 1162.86 2998.49 1162.86H3018.49Q3026.49 1162.86 3026.49 1170.86V1487.5Z"/><path fill="#ffb400" d="M3108.36 1487.5V1154.63Q3108.36 1146.63 3116.36 1146.63H3136.36Q3144.36 1146.63 3144.36 1154.63V1487.5Z"/><path fill="#ffb400" d="M3226.23 1487.5V1195.21Q3226.23 1187.21 3234.23 1187.21H3254.23Q3262.23 1187.21 3262.23 1195.21V1487.5Z"/><path d="M2183.40 1300.83C2222.69 1280.54 2261.98 1260.25 2301.27 1260.25C2340.56 1260.25 2379.85 1300.83 2419.14 1300.83C2458.43 1300.83 2497.72 1227.79 2537.01 1227.79C2576.30 1227.79 2615.59 1284.60 2654.88 1284.60C2694.17 1284.60 2733.46 1146.63 2772.75 1146.63C2812.04 1146.63 2851.33 1227.79 2890.62 1227.79C2929.91 1227.79 2969.20 1227.79 3008.49 1227.79C3047.78 1227.79 3087.07 1265.66 3126.36 1276.48C3165.65 1287.31 3204.94 1290.01 3244.23 1292.72" fill="none" stroke="#2092ec" stroke-width="5"/><circle cx="2183.40" cy="1300.83" r="10" fill="#fff" stroke="#3a98e6" stroke-width="4"/><circle cx="2301.27" cy="1260.25" r="10" fill="#fff" stroke="#3a98e6" stroke-width="4"/><circle cx="2419.14" cy="1300.83" r="10" fill="#fff" stroke="#3a98e6" stroke-width="4"/><circle cx="2537.01" cy="1227.79" r="10" fill="#fff" stroke="#3a98e6" stroke-width="4"/><circle cx="2654.88" cy="1284.60" r="10" fill="#fff" stroke="#3a98e6" stroke-width="4"/><circle cx="2772.75" cy="1146.63" r="10" fill="#fff" stroke="#3a98e6" stroke-width="4"/><circle cx="2890.62" cy="1227.79" r="10" fill="#fff" stroke="#3a98e6" stroke-width="4"/><circle cx="3008.49" cy="1227.79" r="10" fill="#fff" stroke="#3a98e6" stroke-width="4"/><circle cx="3126.36" cy="1276.48" r="10" fill="#fff" stroke="#3a98e6" stroke-width="4"/><circle cx="3244.23" cy="1292.72" r="10" fill="#fff" stroke="#3a98e6" stroke-width="4"/></svg>
<div class="t" style="left:2101.50px;top:1468.14px;font-size:27px;color:#7f7a9a;">0</div>
<div class="t" style="left:2086.30px;top:1386.98px;font-size:27px;color:#7f7a9a;letter-spacing:1.684px;">10</div>
<div class="t" style="left:2087.30px;top:1305.82px;font-size:27px;color:#7f7a9a;letter-spacing:0.684px;">20</div>
<div class="t" style="left:2087.30px;top:1224.66px;font-size:27px;color:#7f7a9a;letter-spacing:0.684px;">30</div>
<div class="t" style="left:2088.30px;top:1143.50px;font-size:27px;color:#7f7a9a;letter-spacing:-0.316px;">40</div>
<div class="t" style="left:2087.30px;top:1062.34px;font-size:27px;color:#7f7a9a;letter-spacing:0.684px;">50</div>
<div class="t" style="left:2151.20px;top:1515.64px;font-size:27px;color:#7f7a9a;letter-spacing:-0.658px;">1 Jan</div>
<div class="t" style="left:2270.07px;top:1515.64px;font-size:27px;color:#7f7a9a;letter-spacing:-0.908px;">2 Jan</div>
<div class="t" style="left:2387.94px;top:1515.64px;font-size:27px;color:#7f7a9a;letter-spacing:-0.908px;">3 Jan</div>
<div class="t" style="left:2506.81px;top:1515.64px;font-size:27px;color:#7f7a9a;letter-spacing:-1.158px;">4 Jan</div>
<div class="t" style="left:2623.68px;top:1515.64px;font-size:27px;color:#7f7a9a;letter-spacing:-0.908px;">5 Jan</div>
<div class="t" style="left:2741.55px;top:1515.64px;font-size:27px;color:#7f7a9a;letter-spacing:-0.908px;">6 Jan</div>
<div class="t" style="left:2859.42px;top:1515.64px;font-size:27px;color:#7f7a9a;letter-spacing:-0.908px;">7 Jan</div>
<div class="t" style="left:2977.29px;top:1515.64px;font-size:27px;color:#7f7a9a;letter-spacing:-0.908px;">8 Jan</div>
<div class="t" style="left:3095.16px;top:1515.64px;font-size:27px;color:#7f7a9a;letter-spacing:-0.908px;">9 Jan</div>
<div class="t" style="left:3203.83px;top:1515.64px;font-size:27px;color:#7f7a9a;letter-spacing:-0.250px;">10 Jan</div>
<div class="r" style="left:2452.2999999999997px;top:1578.2px;width:176.0px;height:65.6px;border:2px solid #474360;border-radius:13px;box-sizing:border-box"></div>
<div class="r" style="left:2478.6px;top:1604.6px;width:16px;height:16px;background:#ffb400;border-radius:50%"></div>
<div class="t" style="left:2509.10px;top:1596.06px;font-size:31px;color:#d5d1ea;letter-spacing:0.528px;">Clicks</div>
<div class="r" style="left:2667.5px;top:1578.2px;width:267.8px;height:65.6px;border:2px solid #474360;border-radius:13px;box-sizing:border-box"></div>
<div class="r" style="left:2693.8px;top:1604.6px;width:16px;height:16px;background:#2092ec;border-radius:50%"></div>
<div class="t" style="left:2724.30px;top:1596.06px;font-size:31px;color:#d5d1ea;letter-spacing:0.420px;">Conversions</div>
<div class="t" style="left:596.20px;top:1774.56px;font-size:31px;color:#c9c4df;letter-spacing:1.031px;">© 2025,</div>
<div class="t" style="left:719.40px;top:1774.56px;font-size:31px;color:#e4e1f0;letter-spacing:-0.150px;-webkit-text-stroke:0.55px #e4e1f0;">Campaign IQ, LLC</div>
<div class="t" style="left:3015.80px;top:1774.46px;font-size:31px;color:#2092ec;letter-spacing:0.728px;">Documentation</div>
<div class="t" style="left:3264.40px;top:1774.46px;font-size:31px;color:#2092ec;letter-spacing:0.756px;">Support</div>
<div class="r" style="left:3378px;top:350px;width:76px;height:76px;background:#2092ec;border-radius:38px 0 0 38px"></div>
<svg class="ic" style="left:3390px;top:362px;width:52px;height:52px" viewBox="3390 362 52 52"><path d="M3413.94 371.62L3417.86 371.62L3420.00 375.69Q3420.22 377.16 3421.42 376.28L3425.81 374.91L3428.59 377.69L3427.22 382.08Q3426.34 383.28 3427.81 383.50L3431.88 385.64L3431.88 389.56L3427.81 391.70Q3426.34 391.92 3427.22 393.12L3428.59 397.51L3425.81 400.29L3421.42 398.92Q3420.22 398.04 3420.00 399.51L3417.86 403.58L3413.94 403.58L3411.80 399.51Q3411.58 398.04 3410.38 398.92L3405.99 400.29L3403.21 397.51L3404.58 393.12Q3405.46 391.92 3403.99 391.70L3399.92 389.56L3399.92 385.64L3403.99 383.50Q3405.46 383.28 3404.58 382.08L3403.21 377.69L3405.99 374.91L3410.38 376.28Q3411.58 377.16 3411.80 375.69Z" fill="none" stroke="#fff" stroke-width="3.8" stroke-linejoin="round"/><circle cx="3415.9" cy="387.6" r="3.85" fill="none" stroke="#fff" stroke-width="3.7"/></svg>
<div class="r" style="left:3302px;top:1657.7px;width:120px;height:120px;background:#2092ec;border-radius:50%;box-shadow:0 4px 12px rgba(0,0,0,0.25)"></div>
<svg class="ic" style="left:3337.8px;top:1691px;width:50px;height:50px" viewBox="0 0 48 48"><path fill="none" stroke="#fff" stroke-width="3.6" stroke-linejoin="round" d="M5 42.8 L7.6 31.3 C3.2 22.4 7.8 10.3 19.8 8.4 C31.6 6.8 41 16 39.4 27.5 C37.8 38.6 25.5 43.4 16.9 38.6 Z"/></svg>
<div class="r" style="left:0;top:-30px;width:3454px;height:1840px;box-sizing:border-box;border-right:2px solid #5c586e;border-bottom:2px solid #55506a;border-radius:0 0 20px 20px;box-shadow:0 0 0 40px #000"></div>
<div class="r" style="left:70px;top:1812px;width:3308px;height:6px;background:#121210;border-top:2px solid #3a3a37;border-radius:8px 8px 0 0;box-sizing:border-box"></div>
<div class="r" style="left:0px;top:0px;width:3454px;height:2px;background:#1c1c1c"></div>
<div class="r" style="left:0px;top:2px;width:3454px;height:2px;background:#3d3d3d"></div>
</div></body></html>
